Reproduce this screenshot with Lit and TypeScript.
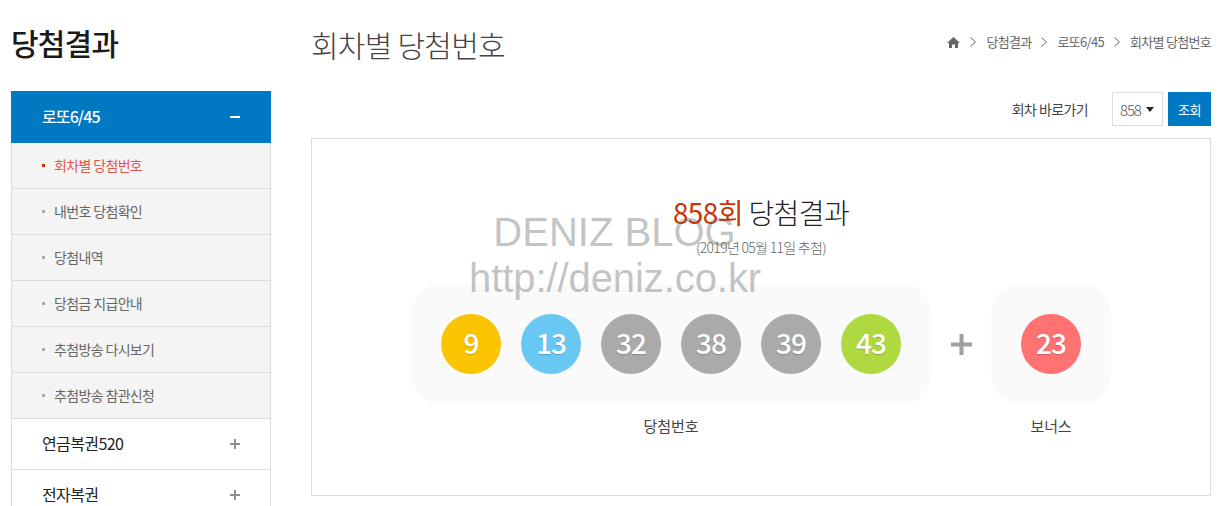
import { LitElement, html, css, svg } from "lit";
import { customElement } from "lit/decorators.js";

const BALLS: [string, string][] = [
  ["9", "#fbc400"],
  ["13", "#69c8f2"],
  ["32", "#aaaaaa"],
  ["38", "#aaaaaa"],
  ["39", "#aaaaaa"],
  ["43", "#b0d840"],
];
const SUB = ["회차별 당첨번호", "내번호 당첨확인", "당첨내역", "당첨금 지급안내", "추첨방송 다시보기", "추첨방송 참관신청"];

const plus = svg`<svg class="ico" width="10" height="10" viewBox="0 0 10 10"><path d="M0 5h10M5 0v10" stroke="#8f8f8f" stroke-width="2" fill="none"/></svg>`;
const minus = svg`<svg class="ico" width="10" height="10" viewBox="0 0 10 10"><path d="M0 5h10" stroke="#fff" stroke-width="2" fill="none"/></svg>`;
const chev = svg`<svg class="chev" width="6" height="10" viewBox="0 0 6 10"><path d="M.5 .5L5.5 5L.5 9.5" stroke="#666" stroke-width="1" fill="none"/></svg>`;

@customElement("app-root")
export class AppRoot extends LitElement {
  static styles = css`
    :host {
      display: block;
      width: 1231px;
      height: 506px;
      overflow: hidden;
      position: relative;
      background: #fff;
      font-family: "Noto Sans CJK KR", "Noto Sans", sans-serif;
      color: #333;
    }
    .page { display: flex; gap: 40px; padding: 0 20px 0 11px; height: 506px; box-sizing: border-box; }
    .side { width: 260px; flex: none; }
    .side h2 {
      margin: 0; height: 91px; font-size: 30px; font-weight: 500; line-height: 85px;
      letter-spacing: -0.8px; color: #1a1a1a;
    }
    .head {
      height: 52px; background: #0079c2; color: #fff; display: flex; align-items: center;
      justify-content: space-between; padding: 0 31px; font-size: 16px; font-weight: 500;
      letter-spacing: -0.9px; box-sizing: border-box;
    }
    .head span { margin-top: -2px; }
    .subs { list-style: none; margin: 0; padding: 0; background: #f4f4f4; border: 1px solid #dcdcdc; border-width: 0 1px; }
    .subs li {
      height: 46px; box-sizing: border-box; border-bottom: 1px solid #dcdcdc; display: flex; align-items: center;
      padding: 0 0 1px 30px; font-size: 14px; color: #666; letter-spacing: -0.65px;
    }
    .subs li::before { content: ""; width: 3px; height: 3px; background: #aaa; margin: 0 9px 0 0; flex: none; }
    .subs li.on { color: #e2584c; }
    .subs li.on::before { background: #cc3300; }
    .group {
      height: 51px; box-sizing: border-box; border: 1px solid #dcdcdc; border-top: 0; display: flex; align-items: center;
      justify-content: space-between; padding: 0 30px; font-size: 16px; font-weight: 400; color: #222; letter-spacing: -0.6px;
    }
    .group span { margin-top: -2px; }
    .main { flex: 1; min-width: 0; }
    .top { height: 92px; display: flex; justify-content: space-between; align-items: flex-start; }
    .top h3 { margin: 0; font-size: 30px; font-weight: 300; color: #444; line-height: 88px; letter-spacing: -0.75px; }
    .crumb { display: flex; align-items: center; gap: 10px; font-size: 13px; color: #666; letter-spacing: -0.7px; height: 84px; }
    .crumb span { margin-top: -2px; }
    .tools { display: flex; justify-content: flex-end; align-items: center; height: 34px; padding-bottom: 12px; }
    .tools .lbl { font-size: 14px; color: #444; letter-spacing: -0.6px; margin-right: 24px; }
    .sel {
      width: 51px; height: 34px; box-sizing: border-box; border: 1px solid #dcdcdc; display: flex; align-items: center;
      font-size: 15px; font-weight: 300; color: #555; padding-left: 7px; gap: 5px; letter-spacing: -1.1px; margin-right: 5px;
    }
    .sel i { width: 0; height: 0; border: 4px solid transparent; border-top: 5px solid #222; border-bottom: 0; }
    .btn {
      width: 43px; height: 34px; background: #0079c2; color: #fff; font-size: 13px; display: flex; align-items: center;
      justify-content: center; letter-spacing: -0.5px;
    }
    .box { height: 358px; border: 1px solid #dcdcdc; box-sizing: border-box; display: flex; flex-direction: column; align-items: center; }
    .title { margin-top: 53px; font-size: 28px; font-weight: 300; line-height: 40px; color: #222; letter-spacing: -0.6px; }
    .title b { font-weight: 400; color: #cc3300; }
    .date { font-size: 14px; line-height: 18px; margin-top: 6px; font-weight: 300; color: #666; letter-spacing: -0.7px; }
    .row { display: flex; margin-top: 28px; }
    .col { display: flex; flex-direction: column; align-items: center; }
    .panel { height: 120px; background: #fafafa; border-radius: 30px; display: flex; align-items: center; gap: 20px; padding: 0 30px; }
    .ball {
      width: 60px; height: 60px; border-radius: 50%; display: flex; align-items: center; justify-content: center;
      color: #fff; font-size: 28px; font-weight: 500; letter-spacing: -0.9px; padding-bottom: 4px; box-sizing: border-box;
      text-shadow: 0 1px 1px rgba(0,0,0,.2); line-height: 1;
    }
    .cap { margin-top: 11px; font-size: 15px; line-height: 22px; color: #444; letter-spacing: -0.1px; }
    .sep { width: 60px; height: 120px; display: flex; align-items: center; justify-content: center; }
    .mark {
      position: absolute; left: 469px; top: 209px; width: 291px; text-align: center; font-family: "Liberation Sans", Arial, sans-serif;
      font-size: 40px; line-height: 47px; color: rgba(100,100,100,.4); pointer-events: none; white-space: nowrap;
    }
    .mark .url { margin-top: -1px; letter-spacing: -0.08px; }
  `;

  render() {
    return html`
      <div class="page">
        <aside class="side">
          <h2>당첨결과</h2>
          <div class="head"><span>로또6/45</span>${minus}</div>
          <ul class="subs">
            ${SUB.map((s, i) => html`<li class=${i === 0 ? "on" : ""}>${s}</li>`)}
          </ul>
          <div class="group"><span>연금복권520</span>${plus}</div>
          <div class="group"><span>전자복권</span>${plus}</div>
        </aside>
        <main class="main">
          <div class="top">
            <h3>회차별 당첨번호</h3>
            <nav class="crumb">
              <svg width="13" height="11" viewBox="0 0 13 11"><path d="M6.5 0L0 6h2v5h3V7.5h3V11h3V6h2z" fill="#666"/></svg>
              ${chev}<span>당첨결과</span>${chev}<span>로또6/45</span>${chev}<span>회차별 당첨번호</span>
            </nav>
          </div>
          <div class="tools">
            <span class="lbl">회차 바로가기</span>
            <div class="sel">858<i></i></div>
            <div class="btn">조회</div>
          </div>
          <section class="box">
            <div class="title"><b>858회</b> 당첨결과</div>
            <div class="date">(2019년 05월 11일 추첨)</div>
            <div class="row">
              <div class="col">
                <div class="panel">
                  ${BALLS.map(([n, c]) => html`<div class="ball" style="background:${c}">${n}</div>`)}
                </div>
                <div class="cap">당첨번호</div>
              </div>
              <div class="sep">
                <svg width="21" height="21" viewBox="0 0 21 21"><path d="M0 10.5h21M10.5 0v21" stroke="#a0a0a0" stroke-width="4" fill="none"/></svg>
              </div>
              <div class="col">
                <div class="panel"><div class="ball" style="background:#ff7272">23</div></div>
                <div class="cap">보너스</div>
              </div>
            </div>
          </section>
        </main>
      </div>
      <div class="mark"><div>DENIZ BLOG</div><div class="url">http://deniz.co.kr</div></div>
    `;
  }
}
